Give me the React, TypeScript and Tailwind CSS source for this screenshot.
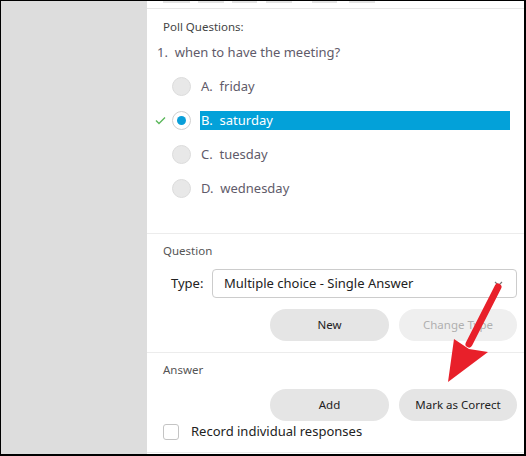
import React from 'react';

const options = [
  { letter: 'A.', text: 'friday', selected: false },
  { letter: 'B.', text: 'saturday', selected: true },
  { letter: 'C.', text: 'tuesday', selected: false },
  { letter: 'D.', text: 'wednesday', selected: false },
];

export default function App() {
  return (
    <div
      className="w-[526px] h-[456px] flex border-black border-l border-t border-r-2 border-b-2 bg-white overflow-hidden"
      style={{ fontFamily: '"Noto Sans", "Open Sans", Arial, sans-serif' }}
    >
      <div className="w-[146px] shrink-0 bg-[#dddddd]" />

      <div className="relative flex-1 flex flex-col bg-white">
        {/* top toolbar remnants */}
        <div className="h-[8px] border-b border-[#e6e6e6] flex items-start">
          <div className="ml-[16px] w-[27px] h-[2px] bg-[#e3e3e3]" />
          <div className="ml-[8px] w-[26px] h-[2px] bg-[#e3e3e3]" />
          <div className="ml-[8px] w-[25px] h-[2px] bg-[#e3e3e3]" />
          <div className="ml-[9px] w-[26px] h-[2px] bg-[#e3e3e3]" />
          <div className="ml-[20px] w-[25px] h-[2px] bg-[#e3e3e3]" />
          <div className="ml-[12px] w-[26px] h-[2px] bg-[#e3e3e3]" />
        </div>

        {/* Poll questions */}
        <div className="h-[225px] border-b border-[#ececec] pl-[16px] pt-[10px]">
          <div className="text-[11.5px] leading-[16px] text-[#444]">Poll Questions:</div>
          <div className="mt-[7px] ml-[-6px] text-[13px] leading-[20px] text-[#5f5b6a]">
            1.&nbsp;&nbsp;when to have the meeting?
          </div>
          <div className="mt-[7px]">
            {options.map((o) => (
              <div key={o.letter} className="h-[34px] flex items-center relative">
                {o.selected && (
                  <svg className="absolute left-[-8px] top-[13px]" width="11" height="9" viewBox="0 0 11 9">
                    <path d="M1 4.5 L4 7.5 L10 1.5" fill="none" stroke="#5cb85c" strokeWidth="1.4" />
                  </svg>
                )}
                <div
                  className={
                    o.selected
                      ? 'ml-[9px] w-[19px] h-[19px] rounded-full bg-white border border-[#cfcfcf] flex items-center justify-center'
                      : 'ml-[9px] w-[19px] h-[19px] rounded-full bg-[#e8e8e8] border border-[#dcdcdc]'
                  }
                >
                  {o.selected && <div className="w-[9px] h-[9px] rounded-full bg-[#0a9fd9]" />}
                </div>
                <div
                  className={
                    o.selected
                      ? 'ml-[9px] w-[310px] h-[19px] bg-[#03a1d9] text-white text-[13px] leading-[19px] pl-[1px]'
                      : 'ml-[9px] text-[13px] leading-[19px] text-[#5f5b6a] pl-[1px]'
                  }
                >
                  {o.letter}&nbsp;&nbsp;{o.text}
                </div>
              </div>
            ))}
          </div>
        </div>

        {/* Question */}
        <div className="h-[119px] border-b border-[#ececec] pl-[16px] pr-[7px] pt-[9px]">
          <div className="text-[11.5px] leading-[16px] text-[#555]">Question</div>
          <div className="mt-[10px] flex items-center">
            <div className="pl-[8px] w-[49px] text-[13px] text-[#222]">Type:</div>
            <div className="flex-1 h-[29px] rounded-[4px] border border-[#cccccc] flex items-center justify-between pl-[11px] pr-[13px]">
              <span className="text-[13px] text-[#222]">Multiple choice - Single Answer</span>
              <svg width="9" height="6" viewBox="0 0 9 6">
                <path d="M1 1 L4.5 4.5 L8 1" fill="none" stroke="#777" strokeWidth="1.2" />
              </svg>
            </div>
          </div>
          <div className="mt-[11px] flex justify-end gap-[10px]">
            <button className="w-[119px] h-[32px] rounded-full bg-[#e5e5e5] text-[11.5px] text-[#222]">New</button>
            <button className="w-[118px] h-[32px] rounded-full bg-[#efefef] text-[11.5px] text-[#b0b0b0]">Change Type</button>
          </div>
        </div>

        {/* Answer */}
        <div className="h-[100px] border-b border-[#ececec] pl-[16px] pr-[7px] pt-[9px]">
          <div className="text-[11.5px] leading-[16px] text-[#555]">Answer</div>
          <div className="mt-[11px] flex justify-end gap-[10px]">
            <button className="w-[119px] h-[32px] rounded-full bg-[#e5e5e5] text-[11.5px] text-[#222]">Add</button>
            <button className="w-[118px] h-[32px] rounded-full bg-[#e5e5e5] text-[11.5px] text-[#222]">Mark as Correct</button>
          </div>
          <div className="mt-[1px] h-[20px] flex items-center">
            <div className="w-[16px] h-[16px] rounded-[3px] border border-[#c4c4c4] bg-white" />
            <span className="ml-[12px] text-[13px] text-[#222]">Record individual responses</span>
          </div>
        </div>

        {/* red annotation arrow */}
        <svg className="absolute left-0 top-0 pointer-events-none" width="377" height="453" viewBox="147 1 377 453">
          <line x1="498" y1="287" x2="469" y2="344" stroke="#e8202a" strokeWidth="7" strokeLinecap="round" />
          <polygon points="448,382 454,339 469,349 488,352" fill="#e8202a" />
        </svg>
      </div>
    </div>
  );
}
